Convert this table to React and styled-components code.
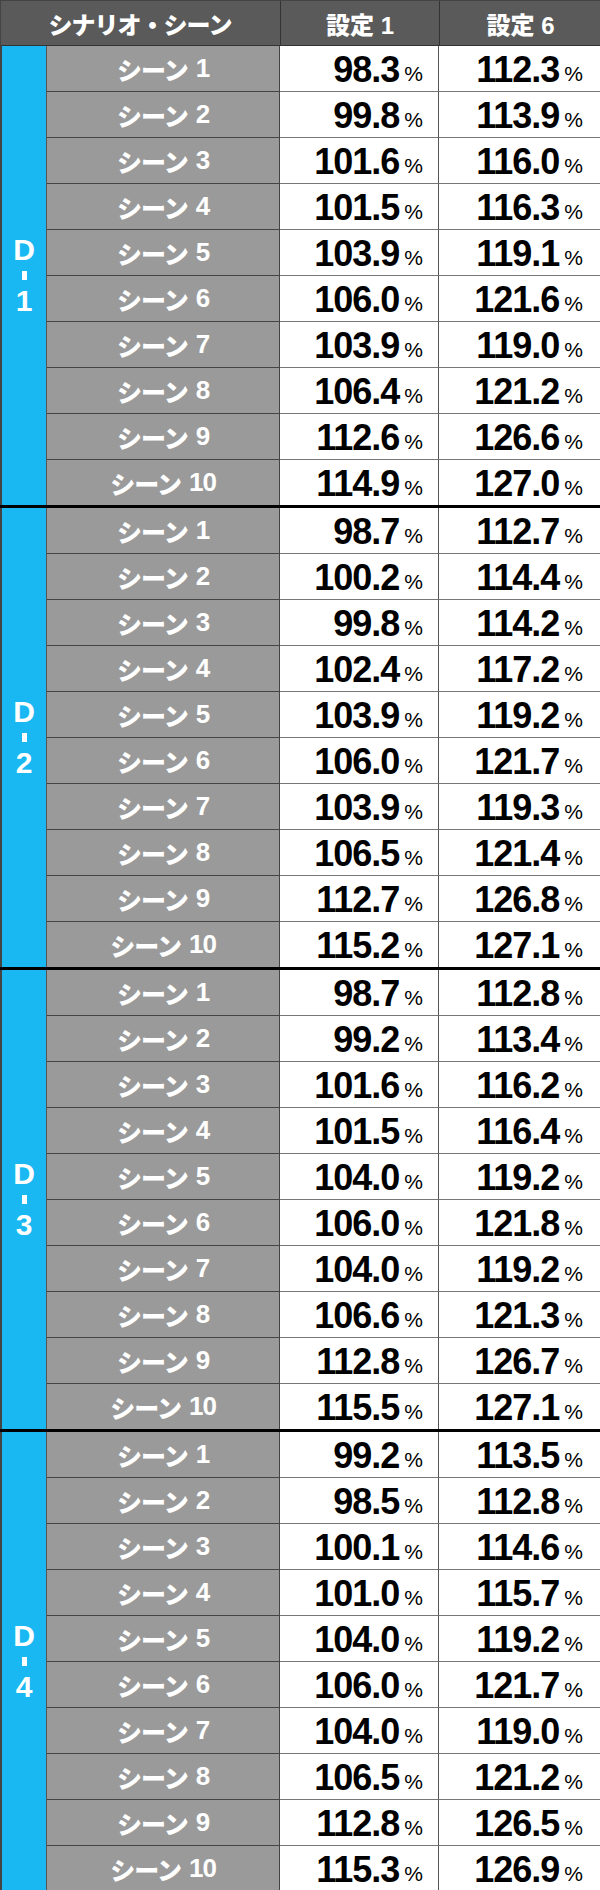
import React from "react";
import styled, { createGlobalStyle } from "styled-components";

const GlobalStyle = createGlobalStyle`
  body {
    margin: 0;
    background: #fff;
  }
`;

// 各シナリオのシーン別 設定1 / 設定6
const data = [
  {
    label: "1",
    rows: [
      ["98.3", "112.3"], ["99.8", "113.9"], ["101.6", "116.0"], ["101.5", "116.3"], ["103.9", "119.1"],
      ["106.0", "121.6"], ["103.9", "119.0"], ["106.4", "121.2"], ["112.6", "126.6"], ["114.9", "127.0"],
    ],
  },
  {
    label: "2",
    rows: [
      ["98.7", "112.7"], ["100.2", "114.4"], ["99.8", "114.2"], ["102.4", "117.2"], ["103.9", "119.2"],
      ["106.0", "121.7"], ["103.9", "119.3"], ["106.5", "121.4"], ["112.7", "126.8"], ["115.2", "127.1"],
    ],
  },
  {
    label: "3",
    rows: [
      ["98.7", "112.8"], ["99.2", "113.4"], ["101.6", "116.2"], ["101.5", "116.4"], ["104.0", "119.2"],
      ["106.0", "121.8"], ["104.0", "119.2"], ["106.6", "121.3"], ["112.8", "126.7"], ["115.5", "127.1"],
    ],
  },
  {
    label: "4",
    rows: [
      ["99.2", "113.5"], ["98.5", "112.8"], ["100.1", "114.6"], ["101.0", "115.7"], ["104.0", "119.2"],
      ["106.0", "121.7"], ["104.0", "119.0"], ["106.5", "121.2"], ["112.8", "126.5"], ["115.3", "126.9"],
    ],
  },
];

const COLS = "47px 233px 159px 161px";

const Table = styled.div`
  width: 600px;
  font-family: "Liberation Sans", "Noto Sans CJK JP", sans-serif;
  border-left: 1px solid #444;
  box-sizing: border-box;
`;

const Header = styled.div`
  display: grid;
  grid-template-columns: 280px 159px 161px;
  height: 46px;
  background: #5a5a5a;
  border-top: 1px solid #444;
  border-bottom: 1px solid #333;
  box-sizing: border-box;
`;

const HeadCell = styled.div`
  display: flex;
  align-items: center;
  justify-content: center;
  color: #fff;
  font-weight: 900;
  font-size: 24px;
  letter-spacing: ${(p) => (p.$tight ? "-1px" : "0")};
  border-right: ${(p) => (p.$last ? "none" : "1px solid #333")};
  margin-left: ${(p) => (p.$first ? "-1px" : "0")};
`;

const Group = styled.div`
  display: grid;
  grid-template-columns: ${COLS};
  grid-template-rows: repeat(9, 46px) 45px;
  border-bottom: ${(p) => (p.$last ? "none" : "3px solid #000")};
  margin-left: -1px;
`;

const Label = styled.div`
  grid-row: 1 / span 10;
  grid-column: 1;
  background: #1ab8f3;
  border-left: 2px solid #444;
  border-right: 1px solid #555;
  display: flex;
  flex-direction: column;
  align-items: center;
  justify-content: center;
  gap: 6px;
  color: #fff;
  font-weight: 700;
  font-size: 30px;
  line-height: 1;
`;

const Dash = styled.span`
  display: block;
  width: 5px;
  height: 9px;
  background: #fff;
`;

const Scene = styled.div`
  background: #9a9a9a;
  color: #fff;
  font-weight: 900;
  font-size: 25px;
  letter-spacing: -1px;
  display: flex;
  align-items: center;
  justify-content: center;
  border-right: 1px solid #444;
  border-bottom: ${(p) => (p.$end ? "none" : "1px solid #444")};
`;

const Num = styled.span`
  font-family: "Liberation Sans", sans-serif;
  font-weight: 700;
  font-size: 26px;
  margin-left: 8px;
`;

const Value = styled.div`
  background: #fff;
  color: #000;
  display: flex;
  align-items: center;
  justify-content: flex-end;
  padding-right: ${(p) => (p.$right ? "17px" : "15px")};
  padding-top: 3px;
  box-sizing: border-box;
  border-right: ${(p) => (p.$right ? "none" : "1px solid #555")};
  border-bottom: ${(p) => (p.$end ? "none" : "1px solid #777")};
`;

const Big = styled.span`
  font-weight: 700;
  font-size: 36px;
  letter-spacing: -1px;
`;

const Pct = styled.span`
  font-size: 21px;
  margin-left: 5px;
  margin-top: 8px;
`;

function Cell({ v, right, end }) {
  return (
    <Value $right={right} $end={end}>
      <Big>{v}</Big>
      <Pct>%</Pct>
    </Value>
  );
}

export default function App() {
  return (
    <>
      <GlobalStyle />
      <Table>
        <Header>
          <HeadCell $tight $first>シナリオ・シーン</HeadCell>
          <HeadCell>設定 1</HeadCell>
          <HeadCell $last>設定 6</HeadCell>
        </Header>
        {data.map((g, gi) => (
          <Group key={g.label} $last={gi === data.length - 1}>
            <Label>
              <span>D</span>
              <Dash />
              <span>{g.label}</span>
            </Label>
            {g.rows.map((r, i) => {
              const end = i === g.rows.length - 1;
              return (
                <React.Fragment key={i}>
                  <Scene $end={end}>
                    シーン<Num>{i + 1}</Num>
                  </Scene>
                  <Cell v={r[0]} end={end} />
                  <Cell v={r[1]} right end={end} />
                </React.Fragment>
              );
            })}
          </Group>
        ))}
      </Table>
    </>
  );
}
